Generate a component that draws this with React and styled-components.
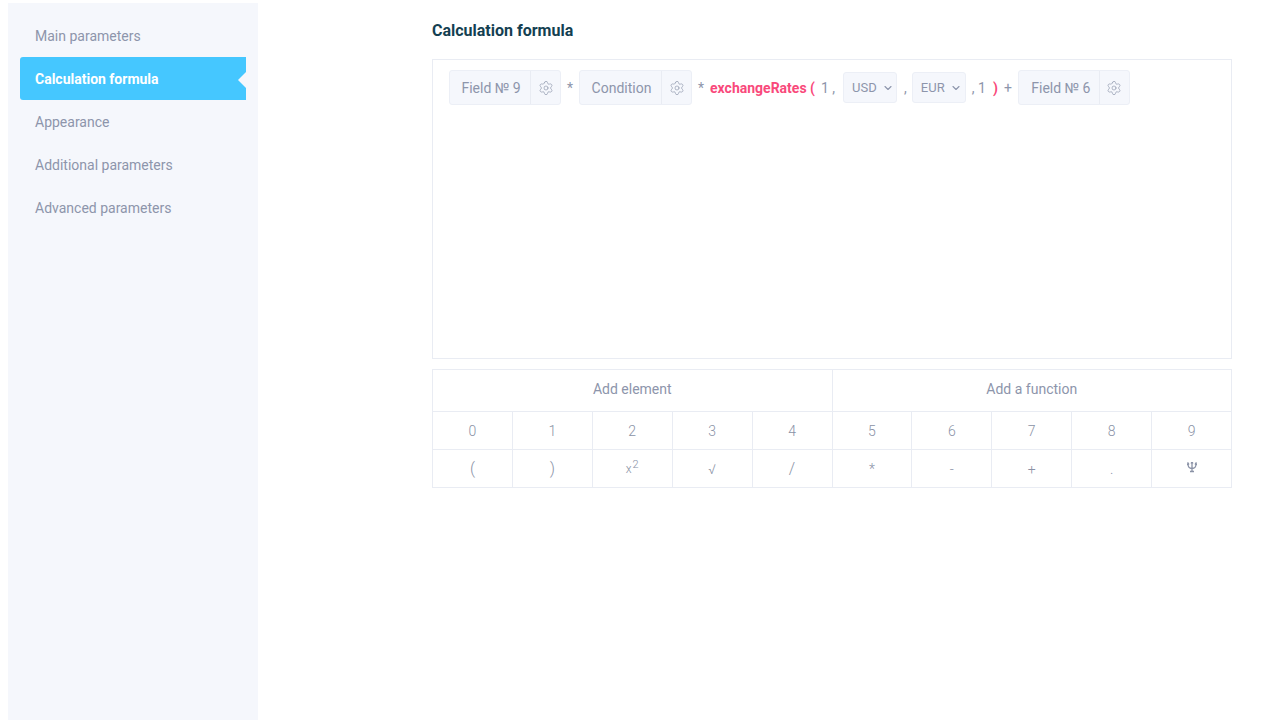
import React from 'react';
import styled, { createGlobalStyle } from 'styled-components';
import { Settings, ChevronDown } from 'lucide-react';

const GlobalStyle = createGlobalStyle`
  html, body { margin: 0; padding: 0; height: 100%; background: #fff; overflow: hidden; }
  body { font-family: Roboto, "Liberation Sans", sans-serif; }
`;

const Page = styled.div`
  display: flex;
  align-items: flex-start;
  height: 720px;
  padding: 3px 0 0 8px;
  box-sizing: border-box;
`;

const Sidebar = styled.nav`
  width: 250px;
  height: 717px;
  padding: 11px 12px;
  box-sizing: border-box;
  background: #f5f7fc;
  flex-shrink: 0;
`;

const MenuItem = styled.div`
  position: relative;
  height: 43px;
  width: 226px;
  padding-left: 15px;
  box-sizing: border-box;
  display: flex;
  align-items: center;
  font-size: 14px;
  color: ${p => (p.$active ? '#fff' : '#8d95ab')};
  font-weight: ${p => (p.$active ? 700 : 400)};
  background: ${p => (p.$active ? '#45c7ff' : 'transparent')};
  border-radius: 3px 0 0 3px;
  ${p => p.$active && `
    &::after {
      content: '';
      position: absolute;
      right: 0;
      top: 15px;
      border-style: solid;
      border-width: 8px 8px 8px 0;
      border-color: transparent #f5f7fc transparent transparent;
    }
  `}
`;

const Main = styled.main`
  width: 800px;
  margin-left: 174px;
  flex-shrink: 0;
`;

const Title = styled.h2`
  margin: 0;
  height: 56px;
  padding-top: 19px;
  box-sizing: border-box;
  font-size: 16px;
  line-height: 18px;
  font-weight: 700;
  color: #143f52;
`;

const Editor = styled.div`
  height: 300px;
  box-sizing: border-box;
  border: 1px solid #e9ecf3;
  padding: 10px 16px;
`;

const Formula = styled.div`
  display: flex;
  align-items: center;
  height: 35px;
  font-size: 14px;
  color: #8d95ab;
`;

const Chip = styled.div`
  display: flex;
  align-items: stretch;
  height: 35px;
  box-sizing: border-box;
  background: #f5f7fc;
  border: 1px solid #eceff6;
  border-radius: 3px;
  margin-left: ${p => p.$left || 0}px;
`;

const ChipLabel = styled.span`
  display: flex;
  align-items: center;
  justify-content: center;
  box-sizing: border-box;
  width: ${p => p.$width}px;
  padding-left: ${p => p.$inset}px;
  font-size: 14px;
  color: #8d95ab;
  border-right: 1px solid #e9ecf3;
`;

const ChipIcon = styled.span`
  display: flex;
  align-items: center;
  justify-content: center;
  width: 29px;
  color: #8d95ab;
`;

const Op = styled.span`
  margin-left: ${p => p.$left || 0}px;
  color: ${p => (p.$pink ? '#f9497b' : '#8d95ab')};
  font-weight: ${p => (p.$pink ? 700 : 400)};
`;

const Select = styled.div`
  display: flex;
  align-items: center;
  width: 54px;
  height: 31px;
  margin-left: ${p => p.$left || 0}px;
  padding-left: 8px;
  box-sizing: border-box;
  gap: 5px;
  font-size: 13px;
  color: #8d95ab;
  background: #f5f7fc;
  border: 1px solid #eceff6;
  border-radius: 3px;
`;

const Pad = styled.div`
  margin-top: 10px;
  display: grid;
  grid-template-columns: repeat(10, 1fr);
  grid-template-rows: 42px 38px 38px;
  border-top: 1px solid #e9ecf3;
  border-left: 1px solid #e9ecf3;
  box-sizing: border-box;
  height: 119px;
`;

const PadCell = styled.div`
  grid-column: span ${p => p.$span || 1};
  display: flex;
  align-items: center;
  justify-content: center;
  padding-bottom: ${p => (p.$head ? 3 : 0)}px;
  border-right: 1px solid #e9ecf3;
  border-bottom: 1px solid #e9ecf3;
  font-size: ${p => (p.$head ? 14 : p.$size || 14)}px;
  font-weight: ${p => (p.$head ? 400 : 300)};
  color: ${p => (p.$head ? '#8d95ab' : '#8a92a6')};
`;

const Power = styled.sup`
  font-size: 11px;
  line-height: 0;
  margin-left: 1px;
  vertical-align: 5px;
`;

const digits = ['0', '1', '2', '3', '4', '5', '6', '7', '8', '9'];
const menu = ['Main parameters', 'Calculation formula', 'Appearance', 'Additional parameters', 'Advanced parameters'];

const FieldChip = ({ label, width, left, inset = 2 }) => (
  <Chip $left={left}>
    <ChipLabel $width={width} $inset={inset}>{label}</ChipLabel>
    <ChipIcon><Settings size={16} strokeWidth={1} /></ChipIcon>
  </Chip>
);

const Currency = ({ code, left }) => (
  <Select $left={left}>
    {code}
    <ChevronDown size={12} strokeWidth={2.2} />
  </Select>
);

export default function App() {
  return (
    <>
      <GlobalStyle />
      <Page>
        <Sidebar>
          {menu.map((m, i) => (
            <MenuItem key={m} $active={i === 1}>{m}</MenuItem>
          ))}
        </Sidebar>
        <Main>
          <Title>Calculation formula</Title>
          <Editor>
            <Formula>
              <FieldChip label="Field № 9" width={81} />
              <Op $left={6}>*</Op>
              <FieldChip label="Condition" width={82} left={6} />
              <Op $left={6}>*</Op>
              <Op $pink $left={6}>exchangeRates (</Op>
              <Op $left={6}>1 ,</Op>
              <Currency code="USD" left={8} />
              <Op $left={7}>,</Op>
              <Currency code="EUR" left={5} />
              <Op $left={6}>, 1</Op>
              <Op $pink $left={7}>)</Op>
              <Op $left={6}>+</Op>
              <FieldChip label="Field № 6" width={81} left={6} inset={4} />
            </Formula>
          </Editor>
          <Pad>
            <PadCell $head $span={5}>Add element</PadCell>
            <PadCell $head $span={5}>Add a function</PadCell>
            {digits.map(d => <PadCell key={d}>{d}</PadCell>)}
            <PadCell $size={16}>(</PadCell>
            <PadCell $size={16}>)</PadCell>
            <PadCell $size={12}><span>x<Power>2</Power></span></PadCell>
            <PadCell>√</PadCell>
            <PadCell $size={16}>/</PadCell>
            <PadCell>*</PadCell>
            <PadCell>-</PadCell>
            <PadCell>+</PadCell>
            <PadCell>.</PadCell>
            <PadCell>
              <svg width="10" height="13" viewBox="0 0 10 13" fill="none" stroke="currentColor" strokeWidth="1.3">
                <path d="M5 0.5v9M3 9.5h4M1 2c0 3 1.3 4.5 4 4.5S9 5 9 2" />
                <path d="M0.5 3L1 1l1 1.5M8 2.5L9 1l.5 2M4 1.5L5 0l1 1.5" />
              </svg>
            </PadCell>
          </Pad>
        </Main>
      </Page>
    </>
  );
}
